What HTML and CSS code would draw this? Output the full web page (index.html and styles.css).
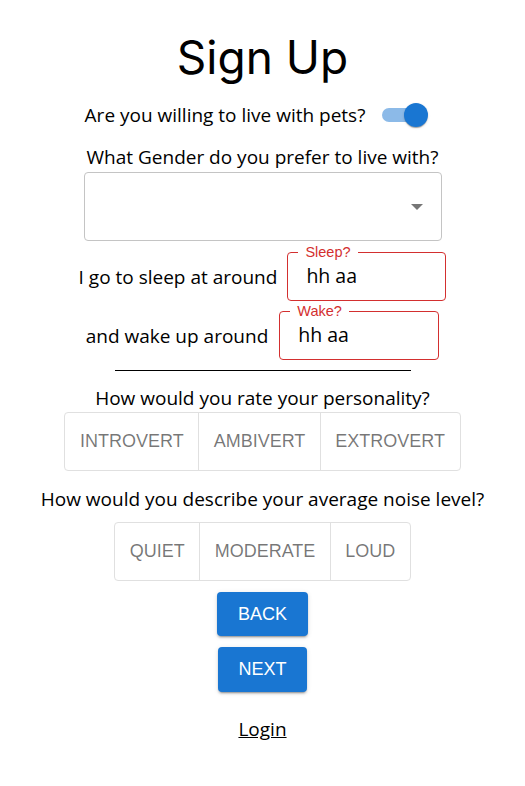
FILE: index.html
```html
<!DOCTYPE html>
<html lang="en">
<head>
<meta charset="utf-8">
<title>Sign Up</title>
<link rel="stylesheet" href="styles.css">
</head>
<body>
<main class="page">
  <h1 class="title">Sign Up</h1>

  <div class="pets-row">
    <span class="text">Are you willing to live with pets?</span>
    <span class="switch" role="switch" aria-checked="true">
      <span class="switch-track"></span>
      <span class="switch-thumb"></span>
    </span>
  </div>

  <div class="question question-gender text">What Gender do you prefer to live with?</div>
  <div class="select">
    <svg class="select-arrow" width="12" height="6" viewBox="0 0 12 6" aria-hidden="true"><path d="M0 0 L6 6 L12 0 Z" fill="#767676"/></svg>
  </div>

  <div class="time-row time-row-sleep">
    <span class="text">I go to sleep at around</span>
    <div class="field">
      <span class="field-label">Sleep?</span>
      <span class="field-value">hh aa</span>
    </div>
  </div>
  <div class="time-row time-row-wake">
    <span class="text">and wake up around</span>
    <div class="field field-wake">
      <span class="field-label">Wake?</span>
      <span class="field-value">hh aa</span>
    </div>
  </div>

  <div class="rule"></div>

  <div class="question question-personality text">How would you rate your personality?</div>
  <div class="toggle-group">
    <span class="toggle">Introvert</span>
    <span class="toggle">Ambivert</span>
    <span class="toggle">Extrovert</span>
  </div>

  <div class="question question-noise text">How would you describe your average noise level?</div>
  <div class="toggle-group toggle-group-noise">
    <span class="toggle">Quiet</span>
    <span class="toggle">Moderate</span>
    <span class="toggle">Loud</span>
  </div>

  <button class="btn btn-back" type="button">Back</button>
  <button class="btn btn-next" type="button">Next</button>

  <a class="login text" href="#">Login</a>
</main>
</body>
</html>
```

FILE: styles.css
```css
* { box-sizing: border-box; }
html, body { margin: 0; padding: 0; background: #fff; }
body {
  font-family: "Open Sans", "Noto Sans", sans-serif;
  color: #000;
}
.page {
  width: 525px;
  display: flex;
  flex-direction: column;
  align-items: center;
}
.text { font-size: 19px; }

.title {
  margin: 26px 0 0;
  height: 62px;
  line-height: 62px;
  font-family: Inter, "Noto Sans", sans-serif;
  font-weight: 400;
  font-size: 46px;
}

.pets-row {
  margin-top: 8px;
  height: 38px;
  display: flex;
  align-items: center;
  gap: 17px;
  padding-right: 12px;
}
.switch {
  position: relative;
  width: 46px;
  height: 24px;
}
.switch-track {
  position: absolute;
  left: 0;
  top: 5px;
  width: 42px;
  height: 14px;
  border-radius: 7px;
  background: #8cbae8;
}
.switch-thumb {
  position: absolute;
  right: 0;
  top: 0;
  width: 24px;
  height: 24px;
  border-radius: 50%;
  background: #1976d2;
  box-shadow: 0 2px 1px -1px rgba(0,0,0,.2), 0 1px 1px rgba(0,0,0,.14), 0 1px 3px rgba(0,0,0,.12);
}

.question {
  height: 28px;
  line-height: 28px;
  white-space: nowrap;
}
.question-gender { margin-top: 8px; height: 30px; line-height: 30px; }

.select {
  width: 358px;
  height: 69px;
  border: 1px solid #c4c4c4;
  border-radius: 4px;
  display: flex;
  align-items: center;
  justify-content: flex-end;
  padding-right: 18px;
}

.time-row {
  display: flex;
  align-items: center;
  gap: 10px;
  margin-top: 11px;
}
.time-row-wake { margin-top: 10px; gap: 11px; }
.field {
  position: relative;
  width: 159px;
  height: 49px;
  border: 1px solid #d32f2f;
  border-radius: 4px;
  display: flex;
  align-items: center;
  padding-left: 18px;
}
.field-wake { width: 160px; }
.field-label {
  position: absolute;
  left: 10px;
  top: -9px;
  padding: 0 7px;
  background: #fff;
  color: #d32f2f;
  font-family: "Liberation Sans", Arial, sans-serif;
  font-size: 14.5px;
  line-height: 16px;
}
.field-value {
  font-size: 19.5px;
  margin-top: -2px;
}

.rule {
  width: 296px;
  height: 1px;
  background: #000;
  margin-top: 10px;
}

.question-personality { margin-top: 13px; }
.question-noise { margin-top: 14px; }

.toggle-group {
  display: flex;
  height: 59px;
  border: 1px solid #e0e0e0;
  border-radius: 4px;
}
.toggle-group-noise { margin-top: 9px; }
.toggle {
  display: flex;
  align-items: center;
  padding: 0 14.5px;
  font-family: "Liberation Sans", Arial, sans-serif;
  font-size: 18px;
  text-transform: uppercase;
  color: rgba(0,0,0,.54);
}
.toggle + .toggle { border-left: 1px solid #e0e0e0; }

.btn {
  margin: 11px 0 0;
  height: 44px;
  padding: 0 20.5px;
  border: 0;
  border-radius: 4px;
  background: #1976d2;
  color: #fff;
  font-family: "Liberation Sans", Arial, sans-serif;
  font-size: 18px;
  text-transform: uppercase;
  box-shadow: 0 3px 1px -2px rgba(0,0,0,.2), 0 2px 2px 0 rgba(0,0,0,.14), 0 1px 5px 0 rgba(0,0,0,.12);
}
.btn-next { height: 45px; }

.login {
  margin-top: 23px;
  height: 28px;
  line-height: 28px;
  color: #000;
  text-decoration: underline;
}
```
